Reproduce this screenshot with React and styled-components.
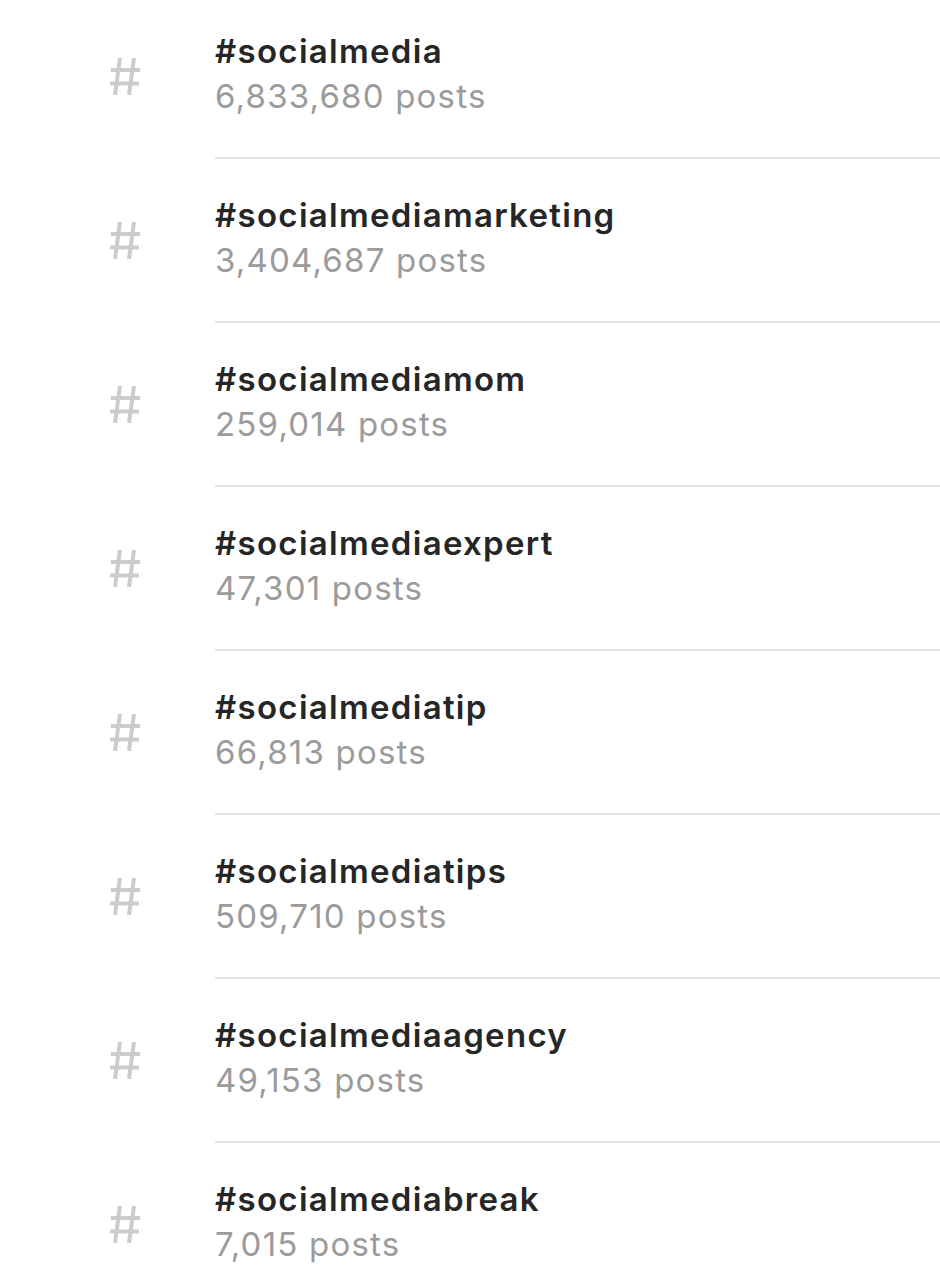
import React from "react";
import styled, { createGlobalStyle } from "styled-components";

const Global = createGlobalStyle`
  html, body { margin: 0; padding: 0; background: #ffffff; }
  body { font-family: Inter, "Liberation Sans", Arial, sans-serif; -webkit-font-smoothing: antialiased; }
`;

const List = styled.ul`
  list-style: none;
  margin: -5px 0 0 0;
  padding: 0;
  width: 940px;
`;

const Row = styled.li`
  display: grid;
  grid-template-columns: 215px 1fr;
  align-items: start;
`;

const IconBox = styled.span`
  display: block;
  width: 30px;
  height: 37px;
  margin: 63px 0 0 110px;
`;

const Body = styled.div`
  padding: 33px 0 38px;
  border-bottom: 2px solid #e3e3e3;
`;

const Tag = styled.div`
  font-size: 33px;
  font-weight: 600;
  line-height: 46px;
  color: #262626;
  letter-spacing: 1.3px;
`;

const Count = styled.div`
  margin-top: -1px;
  font-size: 33px;
  font-weight: 400;
  line-height: 46px;
  color: #9b9b9b;
  letter-spacing: 1.2px;
`;

const HashGlyph = () => (
  <IconBox>
    <svg width="30" height="37" viewBox="0 0 30 37" fill="none" stroke="#cccccc" strokeWidth="4">
      <path d="M10 0 L5 37" />
      <path d="M24 0 L19 37" />
      <path d="M1 12 H30" />
      <path d="M0 25.5 H29" />
    </svg>
  </IconBox>
);

const tags = [
  ["#socialmedia", "6,833,680"],
  ["#socialmediamarketing", "3,404,687"],
  ["#socialmediamom", "259,014"],
  ["#socialmediaexpert", "47,301"],
  ["#socialmediatip", "66,813"],
  ["#socialmediatips", "509,710"],
  ["#socialmediaagency", "49,153"],
  ["#socialmediabreak", "7,015"],
];

export default function App() {
  return (
    <>
      <Global />
      <List>
        {tags.map(([name, count]) => (
          <Row key={name}>
            <HashGlyph />
            <Body>
              <Tag>{name}</Tag>
              <Count>{count} posts</Count>
            </Body>
          </Row>
        ))}
      </List>
    </>
  );
}
